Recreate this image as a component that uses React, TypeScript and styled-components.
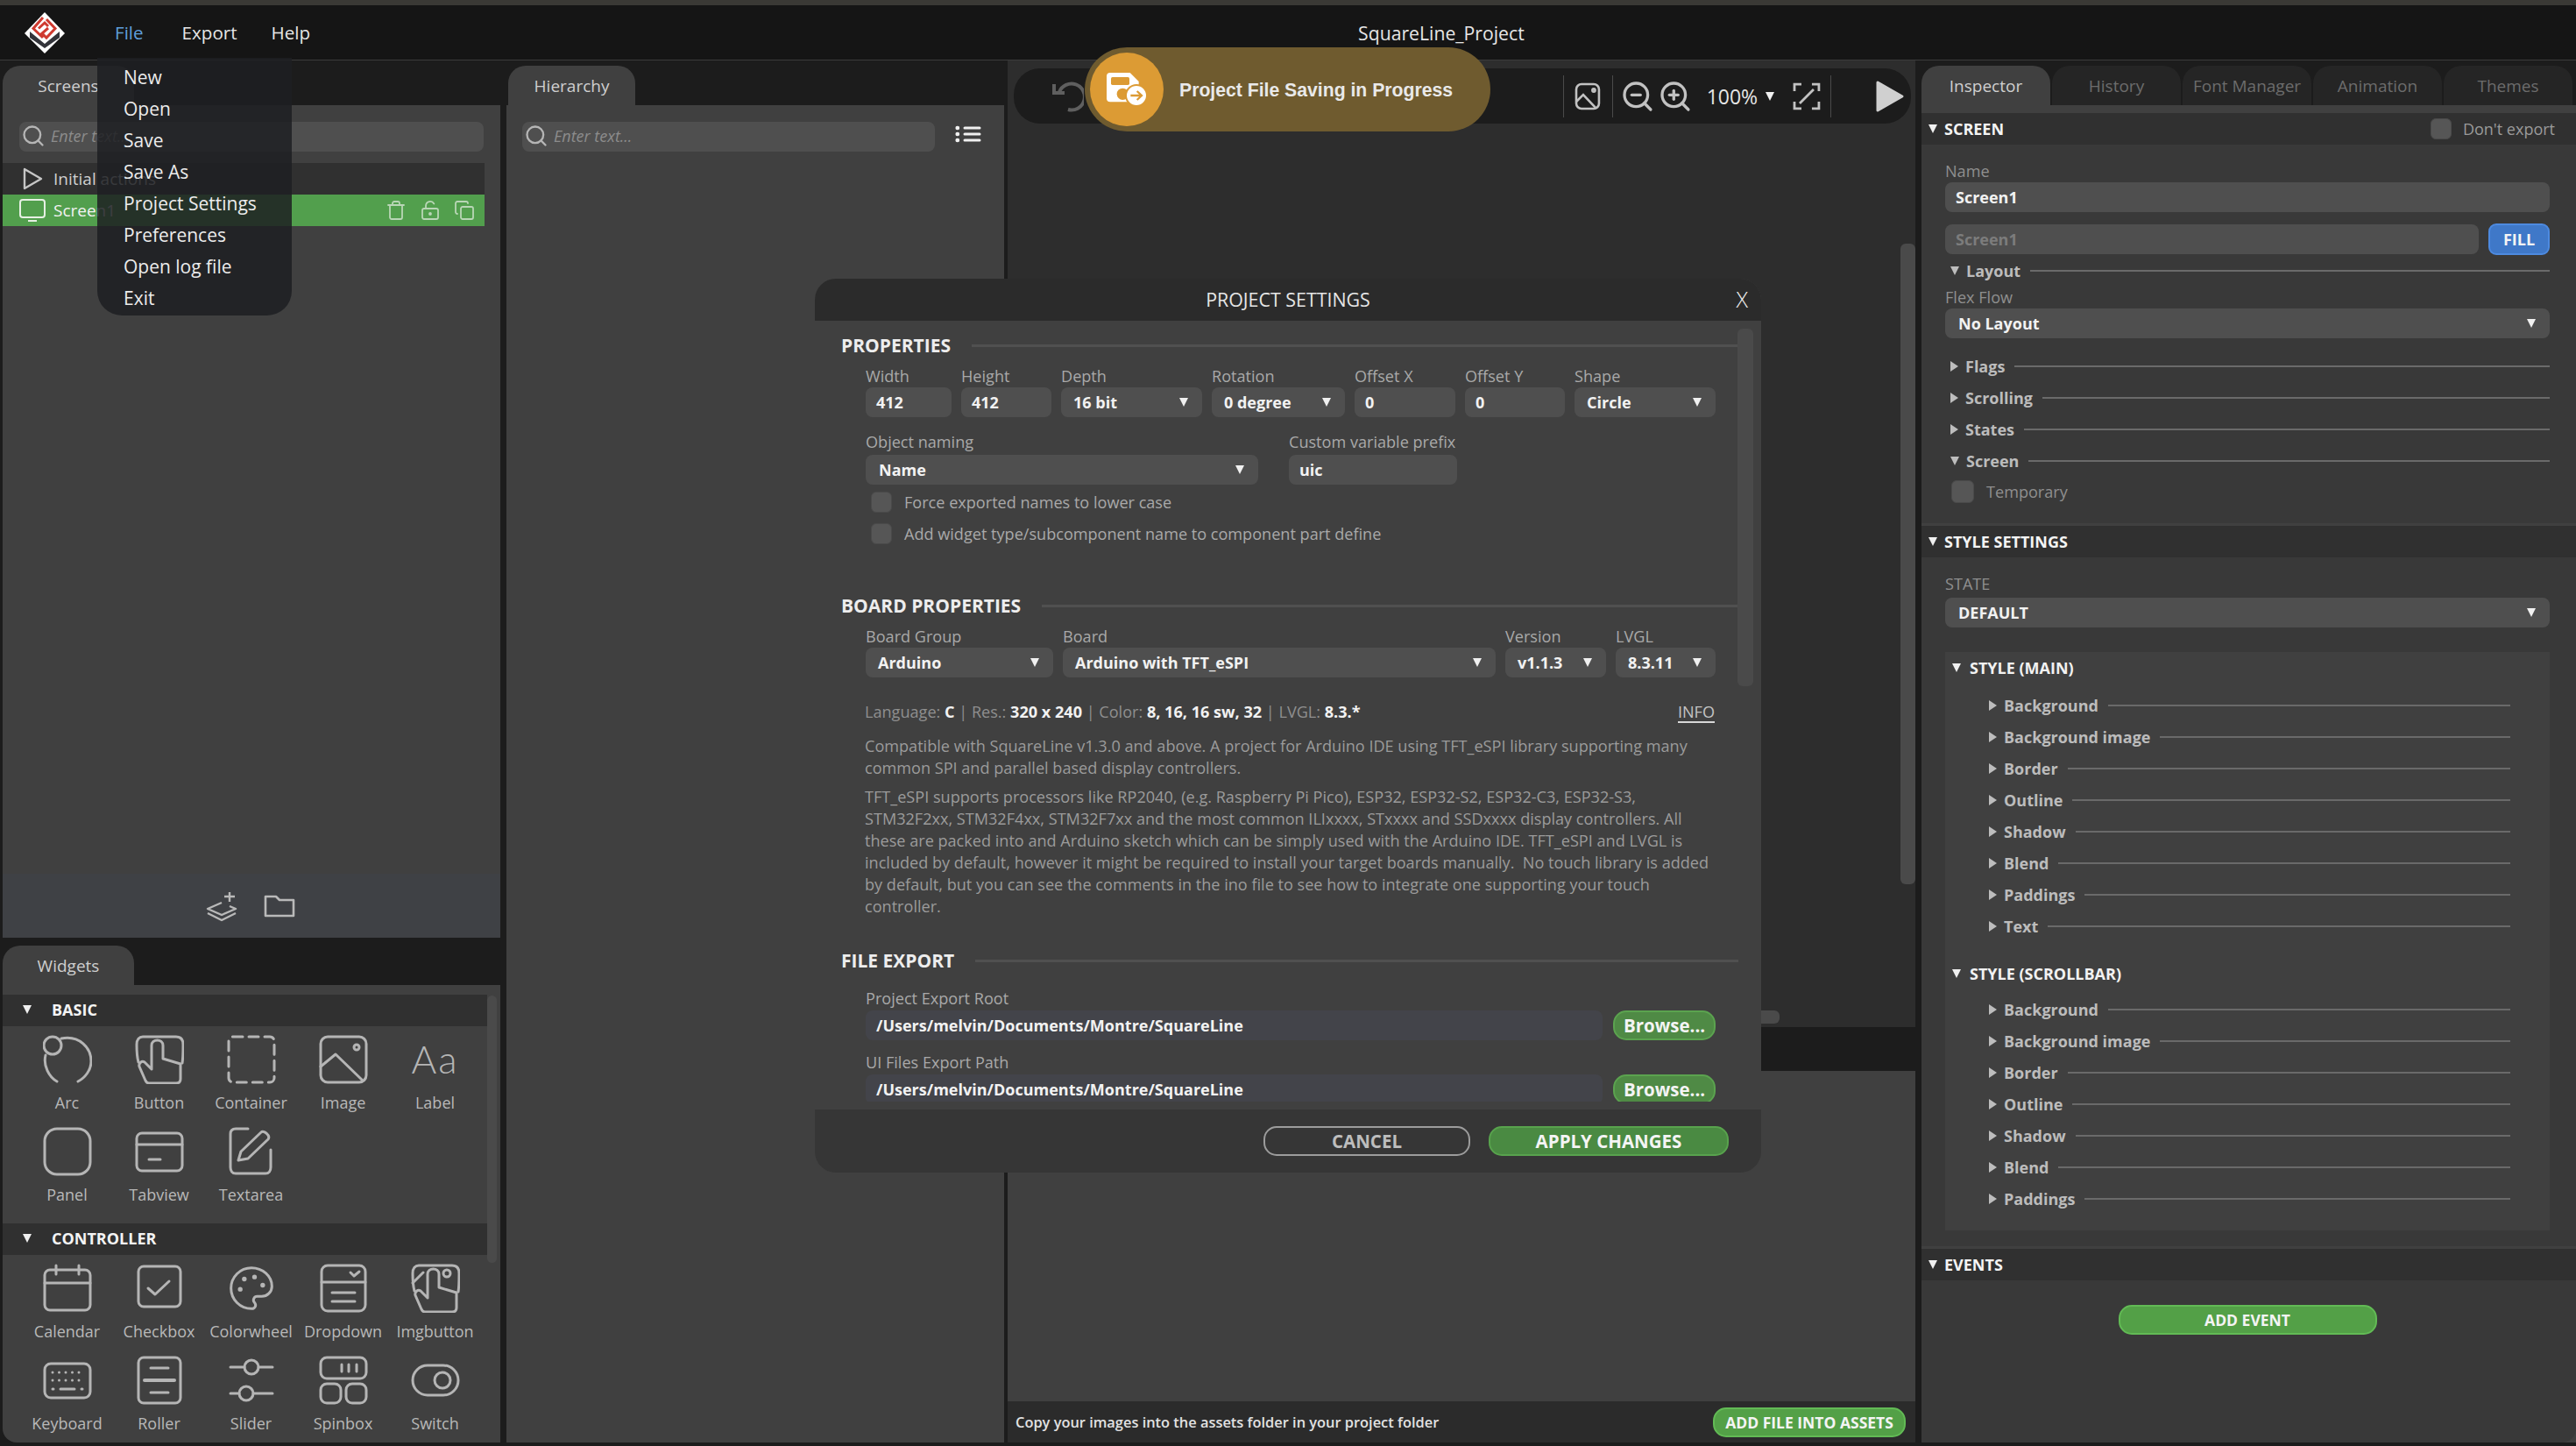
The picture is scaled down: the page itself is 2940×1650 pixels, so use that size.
import { ReactNode } from "react"
import styled, { createGlobalStyle } from "styled-components"
import { Copy, LockKeyholeOpen, Palette, Search, Trash, ZoomIn, ZoomOut } from "lucide-react"

const GlobalStyle = createGlobalStyle`
  html, body { margin: 0; padding: 0; background: #3a3935; }
  * { box-sizing: border-box; }
  body { font-family: "Open Sans", "Noto Sans", sans-serif; }
`

const Shell = styled.div`
  position: relative;
  width: 2940px;
  height: 1650px;
  overflow: hidden;
  display: flex;
  flex-direction: column;
  background: #3a3935;
`
const MenuBar = styled.header`
  height: 63px;
  margin-top: 6px;
  background: #151515;
  border-bottom: 1px solid #3c3c3c;
  display: flex;
  align-items: center;
  padding-left: 28px;
  flex: none;
`
const MenuItem = styled.div<{ $active?: boolean; $left: number }>`
  margin-left: ${(p) => p.$left}px;
  font-size: 20.6px;
  color: ${(p) => (p.$active ? "#5f9fdc" : "#e6e6e6")};
`
const AppTitle = styled.div`
  margin-left: 1196px;
  font-size: 21.2px;
  color: #e6e6e6;
`
const Workspace = styled.div`
  height: 1581px;
  flex: none;
  display: flex;
  background: #1c1c1c;
  overflow: hidden;
  border-bottom: 4px solid #1c1c1c;
  padding-left: 3px;
`
const Column = styled.section<{ $w: number; $mr?: number }>`
  width: ${(p) => p.$w}px;
  margin-right: ${(p) => p.$mr ?? 0}px;
  flex: none;
  display: flex;
  flex-direction: column;
  position: relative;
`
const TabStrip = styled.div<{ $top: number; $left?: number }>`
  flex: none;
  height: ${(p) => p.$top + 45}px;
  padding: ${(p) => p.$top}px 0 0 ${(p) => p.$left ?? 0}px;
  background: #1c1c1c;
  display: flex;
  gap: 2px;
`
const Tab = styled.div<{ $on?: boolean; $w?: number }>`
  width: ${(p) => p.$w ?? 150}px;
  height: 45px;
  border-radius: 20px 20px 0 0;
  background: ${(p) => (p.$on ? "#404040" : "#252525")};
  color: ${(p) => (p.$on ? "#cfcfcf" : "#6c6c6c")};
  font-size: 19px;
  display: flex;
  align-items: center;
  justify-content: center;
`
const Panel = styled.div<{ $h?: number; $corner?: boolean }>`
  background: #404040;
  ${(p) => (p.$h ? `height: ${p.$h}px; flex: none;` : "flex: 1;")}
  ${(p) => (p.$corner ? "border-bottom-left-radius: 16px;" : "")}
  position: relative;
`
const SearchBox = styled.div<{ $ml: number; $w: number }>`
  margin: 19px 0 13px ${(p) => p.$ml}px;
  width: ${(p) => p.$w}px;
  height: 34px;
  border-radius: 8px;
  background: #4f4f4f;
  display: flex;
  align-items: center;
  padding: 0 0 3px 2px;
  gap: 6px;
  color: #8c8c8c;
  font-size: 18px;
  font-style: italic;
`
const TreeRow = styled.div<{ $green?: boolean }>`
  width: 550px;
  height: 36px;
  display: flex;
  align-items: center;
  padding-right: 11px;
  background: ${(p) => (p.$green ? "#529f4d" : "#303030")};
  color: ${(p) => (p.$green ? "#f2f2f2" : "#cfcfcf")};
  font-size: 19px;
`
const TreeIcon = styled.span`
  width: 58px;
  display: flex;
  justify-content: center;
  padding-left: 13px;
  padding-right: 4px;
`
const TreeActions = styled.div`
  margin-left: auto;
  display: flex;
  gap: 15px;
  color: #b9d6b6;
`
const ProjectBar = styled.div`
  height: 73px;
  flex: none;
  background: #3f4145;
  display: flex;
  align-items: center;
  justify-content: center;
  gap: 30px;
  padding-right: 2px;
`
const GroupHeader = styled.div<{ $mt?: number }>`
  height: 36px;
  margin: ${(p) => p.$mt ?? 0}px 15px 0 0;
  padding: 0 0 2px 23px;
  background: #303030;
  display: flex;
  align-items: center;
  color: #f4f4f4;
  font-weight: 700;
  font-size: 18px;
  gap: 23px;
`
const WidgetGrid = styled.div`
  display: grid;
  grid-template-columns: repeat(5, 105px);
  grid-auto-rows: 105px;
  padding: 10px 0 5px 21px;
`
const WidgetCell = styled.div`
  display: flex;
  flex-direction: column;
  align-items: center;
  color: #b8b8b8;
  font-size: 18px;
  line-height: 24px;
  gap: 9px;
`
const WidgetIcon = styled.svg.attrs({
  viewBox: "0 0 56 56",
  fill: "none",
  stroke: "#b5b5b5",
  strokeWidth: 3,
  strokeLinecap: "round",
  strokeLinejoin: "round",
})`
  width: 56px;
  height: 56px;
  flex: none;
`
const AaGlyph = styled.div`
  height: 56px;
  width: 56px;
  font-family: "Lato", sans-serif;
  font-weight: 300;
  font-size: 44px;
  letter-spacing: 2px;
  white-space: nowrap;
  line-height: 54px;
  color: #b5b5b5;
  text-align: center;
`
const ScrollThumb = styled.div<{ $top: number; $h: number; $x: number; $w: number }>`
  position: absolute;
  top: ${(p) => p.$top}px;
  right: ${(p) => p.$x}px;
  width: ${(p) => p.$w}px;
  height: ${(p) => p.$h}px;
  border-radius: 6px;
  background: #4a4a4a;
`
const Caret = styled.span<{ $dir?: "down" | "right"; $color?: string }>`
  display: inline-block;
  flex: none;
  width: 0;
  height: 0;
  ${(p) =>
    p.$dir === "right"
      ? `border-top: 6px solid transparent; border-bottom: 6px solid transparent; border-left: 9px solid ${p.$color ?? "#bdbdbd"};`
      : `border-left: 5.5px solid transparent; border-right: 5.5px solid transparent; border-top: 10px solid ${p.$color ?? "#f0f0f0"};`}
`
const Viewport = styled.div`
  height: 1103px;
  flex: none;
  background: #2d2d2d;
  padding-top: 9px;
  position: relative;
`
const Toolbar = styled.div`
  margin: 0 5px 0 7px;
  height: 63px;
  border-radius: 30px;
  background: #1c1c1c;
  display: flex;
  align-items: center;
  padding: 0 8px 0 44px;
  color: #c2c2c2;
`
const ToolSep = styled.div<{ $ml?: number; $mr?: number }>`
  width: 1px;
  height: 48px;
  background: #4a4a4a;
  margin-left: ${(p) => p.$ml ?? 0}px;
  margin-right: ${(p) => p.$mr ?? 0}px;
`
const ZoomValue = styled.div`
  font-size: 23px;
  color: #e6e6e6;
  margin: 0 9px 0 16px;
`
const ZoomInIcon = styled(ZoomIn)`
  margin-left: 3px;
`
const FitIcon = styled.svg`
  margin-left: 21px;
`
const HorizontalThumb = styled.div`
  position: absolute;
  left: 10px;
  top: 1084px;
  width: 871px;
  height: 15px;
  border-radius: 6px;
  background: #4a4a4a;
`
const AssetFooter = styled.div`
  height: 47px;
  flex: none;
  background: #2b2b2b;
  display: flex;
  align-items: center;
  justify-content: space-between;
  padding: 0 11px 0 9px;
  font-size: 16.4px;
  font-weight: 600;
  color: #e2e2e2;
`
const GreenButton = styled.div<{ $w: number; $h?: number; $size?: number }>`
  width: ${(p) => p.$w}px;
  height: ${(p) => p.$h ?? 34}px;
  flex: none;
  border-radius: 15px;
  background: #53a047;
  border: 2px solid #62bb55;
  color: #f4f4f4;
  font-weight: 700;
  font-size: ${(p) => p.$size ?? 17.5}px;
  white-space: nowrap;
  display: flex;
  align-items: center;
  justify-content: center;
`
const FillButton = styled(GreenButton)`
  background: #3f78c8;
  border-color: #4d8ae0;
  border-radius: 9px;
`
const Inspector = styled.div`
  flex: 1;
  display: flex;
  flex-direction: column;
  padding-top: 9px;
  background: #404040;
`
const SectionHeader = styled.div`
  flex: none;
  height: 36px;
  background: #303030;
  display: flex;
  align-items: center;
  padding: 0 24px 0 8px;
  gap: 8px;
  color: #f4f4f4;
  font-size: 18px;
  font-weight: 700;
`
const HeaderTitle = styled.span`
  margin-right: auto;
`
const ExportLabel = styled.span`
  margin-left: 5px;
  font-size: 18px;
  font-weight: 400;
  color: #9a9a9a;
`
const SectionBody = styled.div<{ $pad: number; $h?: number; $corner?: boolean }>`
  background: #393939;
  padding: ${(p) => p.$pad}px 30px 0 27px;
  ${(p) => (p.$h ? `height: ${p.$h}px; flex: none;` : "flex: 1;")}
  ${(p) => (p.$corner ? "border-bottom-right-radius: 16px;" : "")}
`
const SectionGap = styled.div`
  height: 3px;
  flex: none;
`
const FieldLabel = styled.div<{ $inspector?: boolean; $mt?: number }>`
  font-size: 18.1px;
  line-height: 20px;
  margin-top: ${(p) => p.$mt ?? 0}px;
  color: ${(p) => (p.$inspector ? "#8f8f8f" : "#a9a9a9")};
  white-space: nowrap;
`
const ValueBox = styled.div<{ $muted?: boolean; $pl?: number; $dark?: boolean; $mt?: number; $grow?: boolean }>`
  height: 34px;
  margin-top: ${(p) => p.$mt ?? 0}px;
  ${(p) => (p.$grow ? "flex: 1;" : "")}
  border-radius: 8px;
  background: ${(p) => (p.$dark ? "#43444a" : "#4f4f4f")};
  display: flex;
  align-items: center;
  justify-content: space-between;
  padding: 0 16px 0 ${(p) => p.$pl ?? 12}px;
  font-size: 18px;
  font-weight: 700;
  color: ${(p) => (p.$muted ? "#7c7c7c" : "#f2f2f2")};
  white-space: nowrap;
`
const InlineRow = styled.div<{ $mt?: number; $gap?: number; $pl?: number; $center?: boolean }>`
  display: flex;
  align-items: center;
  margin-top: ${(p) => p.$mt ?? 0}px;
  gap: ${(p) => p.$gap ?? 0}px;
  padding-left: ${(p) => p.$pl ?? 0}px;
  ${(p) => (p.$center ? "justify-content: center;" : "")}
`
const CollapseRow = styled.div<{ $mt?: number }>`
  height: 24px;
  margin-top: ${(p) => p.$mt ?? 0}px;
  display: flex;
  align-items: center;
  gap: 8px;
  font-size: 18px;
  font-weight: 700;
  color: #bcbcbc;
  white-space: nowrap;
  &::after {
    content: "";
    flex: 1;
    height: 2px;
    margin-left: 3px;
    background: #6a6a6a;
  }
`
const CollapseList = styled.div<{ $pl: number; $pr: number; $pitch: number; $mt?: number }>`
  display: flex;
  flex-direction: column;
  margin-top: ${(p) => p.$mt ?? 0}px;
  gap: ${(p) => p.$pitch - 24}px;
  padding-left: ${(p) => p.$pl}px;
  padding-right: ${(p) => p.$pr}px;
`
const Check = styled.span<{ $size?: number }>`
  width: ${(p) => p.$size ?? 24}px;
  height: ${(p) => p.$size ?? 24}px;
  flex: none;
  border-radius: 6px;
  background: #565656;
  border: 1px solid #4a4a4a;
`
const StyleBox = styled.div`
  margin-top: 28px;
  height: 660px;
  background: #404040;
  padding-top: 6px;
`
const StyleHeading = styled.div<{ $mt?: number; $mb: number }>`
  height: 24px;
  margin-top: ${(p) => p.$mt ?? 0}px;
  margin-bottom: ${(p) => p.$mb}px;
  padding-left: 8px;
  display: flex;
  align-items: center;
  gap: 10px;
  font-size: 18px;
  font-weight: 700;
  color: #f2f2f2;
`
const DropdownMenu = styled.div`
  position: absolute;
  left: 111px;
  top: 66px;
  width: 222px;
  height: 294px;
  padding: 4px 0 0 30px;
  border-radius: 0 0 28px 28px;
  background: rgba(29, 30, 34, 0.85);
  color: #ececec;
  font-size: 21px;
  line-height: 36px;
`
const SavingPill = styled.div`
  position: absolute;
  left: 1238px;
  top: 54px;
  width: 463px;
  height: 96px;
  border-radius: 48px;
  background: #6f5b2f;
  display: flex;
  align-items: center;
  padding-left: 6px;
  gap: 18px;
  font-family: "Liberation Sans", Arial, sans-serif;
  font-weight: 700;
  font-size: 21.2px;
  color: #e9e9e9;
`
const PillText = styled.span`
  padding-top: 2px;
`
const PillBadge = styled.div`
  width: 84px;
  height: 84px;
  border-radius: 50%;
  background: #dc9b34;
  display: flex;
  align-items: center;
  justify-content: center;
`
const Modal = styled.div`
  position: absolute;
  left: 930px;
  top: 318px;
  width: 1080px;
  height: 1020px;
  border-radius: 24px;
  overflow: hidden;
  display: flex;
  flex-direction: column;
  background: #404040;
`
const ModalHeader = styled.div`
  height: 48px;
  flex: none;
  background: #2b2b2b;
  display: flex;
  align-items: center;
  justify-content: center;
  padding-bottom: 2px;
  position: relative;
  color: #e6e6e6;
  font-size: 21.4px;
`
const CloseMark = styled.div`
  position: absolute;
  right: 15px;
  top: 6px;
  color: #f0f0f0;
  font-size: 25px;
  font-weight: 300;
`
const ModalBody = styled.div`
  height: 891px;
  flex: none;
  overflow: hidden;
  padding: 16px 0 0 31px;
  position: relative;
`
const ModalFooter = styled.div`
  margin-top: 9px;
  flex: 1;
  background: #363636;
  display: flex;
  justify-content: flex-end;
  gap: 21px;
  padding: 19px 37px 0 0;
`
const OutlineButton = styled.div`
  width: 236px;
  height: 34px;
  border-radius: 15px;
  border: 2px solid #9c9c9c;
  color: #bdbdbd;
  font-size: 20.5px;
  font-weight: 700;
  display: flex;
  align-items: center;
  justify-content: center;
`
const SolidButton = styled(GreenButton)`
  background: #4a8a42;
  border-color: #58a34d;
`
const BrowseButton = styled(GreenButton)`
  background: #4f8a45;
  border-color: #5ba34f;
  font-size: 20.5px;
`
const HeadingRow = styled.div<{ $mt?: number }>`
  height: 24px;
  margin-top: ${(p) => p.$mt ?? 0}px;
  margin-left: -1px;
  display: flex;
  align-items: center;
  gap: 24px;
  padding-right: 26px;
  font-size: 21px;
  font-weight: 700;
  color: #ededed;
  white-space: nowrap;
  &::after {
    content: "";
    flex: 1;
    height: 3px;
    background: #505050;
  }
`
const FieldRow = styled.div<{ $mt: number; $gap?: number }>`
  display: flex;
  gap: ${(p) => p.$gap ?? 11}px;
  margin: ${(p) => p.$mt}px 0 0 27px;
  width: 970px;
`
const Field = styled.div<{ $w: number; $gap?: number }>`
  width: ${(p) => p.$w}px;
  flex: none;
  display: flex;
  flex-direction: column;
  gap: ${(p) => p.$gap ?? 3}px;
`
const NamingRow = styled(FieldRow)`
  align-items: flex-end;
`
const CheckList = styled.div`
  margin-top: 2px;
`
const CheckRow = styled.div`
  height: 36px;
  margin-left: 33px;
  display: flex;
  align-items: center;
  gap: 14px;
  font-size: 18.1px;
  color: #a9a9a9;
`
const StatLine = styled.div`
  margin: 29px 0 0 26px;
  width: 970px;
  height: 20px;
  line-height: 20px;
  font-size: 18.1px;
  color: #8f8f8f;
  display: flex;
  justify-content: space-between;
  & b {
    color: #f2f2f2;
    font-weight: 700;
  }
`
const InfoLink = styled.span`
  color: #c4c4c4;
  border-bottom: 2px solid #d8d8d8;
  height: 23px;
`
const Para = styled.p<{ $mt: number }>`
  margin: ${(p) => p.$mt}px 0 0 26px;
  width: 970px;
  font-size: 18.1px;
  line-height: 25px;
  white-space: pre-wrap;
  color: #9b9b9b;
`
const PathRow = styled.div<{ $mt: number }>`
  margin: ${(p) => p.$mt}px 0 0 27px;
`
const PathControls = styled.div`
  display: flex;
  gap: 12px;
  margin-top: 4px;
  width: 970px;
`
const ListSpot = styled.span`
  margin-left: 23px;
  display: flex;
`

const Hand = ({ picture }: { picture?: boolean }) => (
  <WidgetIcon>
    <path d="M4 31C2 24 2 16 2 11C2 5 5 2 9 2H47C52 2 55 5 55 11C55 18 55 26 54 32" />
    <path d="M19 39V12C19 4 32 4 32 12V27L52 33V50C52 54 50 55 47 55H16C14 55 13 54 12 52L5 36C4 32 8 29 11 31L19 39" />
    {picture && <circle cx="41" cy="11" r="4" />}
    {picture && <path d="M2 22L14 10" />}
  </WidgetIcon>
)

const basicWidgets: { name: string; icon: ReactNode }[] = [
  {
    name: "Arc",
    icon: (
      <WidgetIcon>
        <circle cx="11" cy="12" r="10" />
        <path d="M21 4C42 0 55 15 55 30C55 40 48 49 40 53" />
        <path d="M3 23C0 35 7 48 16 53" />
      </WidgetIcon>
    ),
  },
  { name: "Button", icon: <Hand /> },
  {
    name: "Container",
    icon: (
      <WidgetIcon>
        <rect x="2" y="2" width="52" height="52" rx="5" strokeDasharray="11 7" />
      </WidgetIcon>
    ),
  },
  {
    name: "Image",
    icon: (
      <WidgetIcon>
        <rect x="2" y="2" width="52" height="52" rx="8" />
        <circle cx="43" cy="14" r="3" />
        <path d="M2 36L19 22L50 52" />
      </WidgetIcon>
    ),
  },
  { name: "Label", icon: <AaGlyph>Aa</AaGlyph> },
  {
    name: "Panel",
    icon: (
      <WidgetIcon>
        <rect x="2" y="2" width="52" height="52" rx="14" />
      </WidgetIcon>
    ),
  },
  {
    name: "Tabview",
    icon: (
      <WidgetIcon>
        <rect x="2" y="7" width="52" height="43" rx="6" />
        <path d="M2 20H54M16 37H29" />
      </WidgetIcon>
    ),
  },
  {
    name: "Textarea",
    icon: (
      <WidgetIcon>
        <path d="M24 2H10C6 2 4 4 4 8V46C4 50 6 53 10 53H44C48 53 50 50 50 46V26" />
        <path d="M13 38L16 28L39 6C42 3 50 10 47 14L24 36Z" />
      </WidgetIcon>
    ),
  },
]

const controllerWidgets: { name: string; icon: ReactNode }[] = [
  {
    name: "Calendar",
    icon: (
      <WidgetIcon>
        <rect x="2" y="7" width="52" height="46" rx="6" />
        <path d="M2 22H54M15 2V12M41 2V12" />
      </WidgetIcon>
    ),
  },
  {
    name: "Checkbox",
    icon: (
      <WidgetIcon>
        <rect x="4" y="3" width="48" height="46" rx="6" />
        <path d="M15 28L23 35L39 20" />
      </WidgetIcon>
    ),
  },
  { name: "Colorwheel", icon: <Palette size={56} strokeWidth={1.3} color="#b5b5b5" /> },
  {
    name: "Dropdown",
    icon: (
      <WidgetIcon>
        <rect x="3" y="2" width="50" height="52" rx="7" />
        <path d="M3 21H53M15 33H41M15 43H41M36 10L40 14L46 9" />
      </WidgetIcon>
    ),
  },
  { name: "Imgbutton", icon: <Hand picture /> },
  {
    name: "Keyboard",
    icon: (
      <WidgetIcon>
        <rect x="2" y="9" width="52" height="39" rx="7" />
        <path strokeDasharray="0 7.5" d="M11 19H47M11 28H47" />
        <path d="M11 38H12M20 38H36M44 38H45" />
      </WidgetIcon>
    ),
  },
  {
    name: "Roller",
    icon: (
      <WidgetIcon>
        <rect x="4" y="2" width="48" height="52" rx="6" />
        <path d="M18 14H38M18 42H38" />
        <path strokeWidth="4" d="M11 28H45" />
      </WidgetIcon>
    ),
  },
  {
    name: "Slider",
    icon: (
      <WidgetIcon>
        <circle cx="28" cy="13" r="8" />
        <circle cx="22" cy="43" r="8" />
        <path d="M4 13H20M36 13H52M4 43H14M30 43H52" />
      </WidgetIcon>
    ),
  },
  {
    name: "Spinbox",
    icon: (
      <WidgetIcon>
        <rect x="2" y="2" width="52" height="24" rx="7" />
        <rect x="2" y="32" width="23" height="22" rx="7" />
        <rect x="31" y="32" width="23" height="22" rx="7" />
        <path d="M26 10V18M34 10V18M43 10V18" />
      </WidgetIcon>
    ),
  },
  {
    name: "Switch",
    icon: (
      <WidgetIcon>
        <rect x="2" y="11" width="52" height="34" rx="17" />
        <circle cx="36" cy="28" r="9" />
      </WidgetIcon>
    ),
  },
]

const Logo = () => (
  <svg width="46" height="47" viewBox="0 0 46 47">
    <path d="M23 0L46 24L23 47L0 24Z" fill="#fff" />
    <path d="M6 22L23 36L40 22V29L23 41L6 29Z" fill="#33343a" />
    <path d="M21 6L10 18.5L21 29M16 18.5L23 12L27 16M25 8L35 18.5L25 29L20 24L27 18" fill="none" stroke="#cf3a30" strokeWidth="3" />
  </svg>
)

const ListIcon = () => (
  <svg width="30" height="20" viewBox="0 0 30 20" fill="none" stroke="#f0f0f0" strokeLinecap="round">
    <path strokeWidth="3" d="M11 3H28M11 10H28M11 17H28" />
    <path strokeWidth="4.4" d="M2.6 3H3M2.6 10H3M2.6 17H3" />
  </svg>
)

const SaveGlyph = () => (
  <svg width="46" height="39" viewBox="70 85 138 117">
    <path d="M70 97Q70 85 82 85H150L180 115V185H82Q70 185 70 173Z" fill="#fff" />
    <rect x="85" y="100" width="63" height="27" rx="5" fill="#dc9b34" />
    <circle cx="125" cy="158" r="20" fill="#dc9b34" />
    <circle cx="172" cy="163" r="39" fill="#dc9b34" />
    <circle cx="172" cy="163" r="33" fill="#fff" />
    <path d="M152 163H190M174 148L190 163L174 178" fill="none" stroke="#dc9b34" strokeWidth="7" />
  </svg>
)

const inspectorRow = (label: string, open?: boolean, mt?: number) => (
  <CollapseRow key={label} $mt={mt}>
    <Caret $dir={open ? "down" : "right"} $color="#bdbdbd" />
    {label}
  </CollapseRow>
)

const StyleList = ({ items }: { items: string[] }) => (
  <CollapseList $pl={50} $pr={45} $pitch={36}>
    {items.map((i) => inspectorRow(i))}
  </CollapseList>
)

const Select = ({ value, pl, mt }: { value: string; pl?: number; mt?: number }) => (
  <ValueBox $pl={pl} $mt={mt}>
    {value}
    <Caret />
  </ValueBox>
)

export default function App() {
  return (
    <Shell>
      <GlobalStyle />
      <MenuBar>
        <Logo />
        <MenuItem $active $left={57}>File</MenuItem>
        <MenuItem $left={44}>Export</MenuItem>
        <MenuItem $left={39}>Help</MenuItem>
        <AppTitle>SquareLine_Project</AppTitle>
      </MenuBar>

      <Workspace>
        <Column $w={568} $mr={7}>
          <TabStrip $top={6}>
            <Tab $on>Screens</Tab>
          </TabStrip>
          <Panel>
            <SearchBox $ml={19} $w={530}>
              <Search size={28} color="#b5b5b5" strokeWidth={2} />
              Enter text...
            </SearchBox>
            <TreeRow>
              <TreeIcon>
                <svg width="24" height="26" viewBox="0 0 24 26" fill="none" stroke="#c6c6c6" strokeWidth="2.4" strokeLinejoin="round">
                  <path d="M3 2L22 13L3 24Z" />
                </svg>
              </TreeIcon>
              Initial actions
            </TreeRow>
            <TreeRow $green>
              <TreeIcon>
                <svg width="30" height="26" viewBox="0 0 30 26" fill="none" stroke="#e6f0e4" strokeWidth="2">
                  <rect x="1" y="1" width="28" height="20" rx="3" />
                  <path d="M10 25H20" />
                </svg>
              </TreeIcon>
              Screen1
              <TreeActions>
                <Trash size={24} strokeWidth={1.8} />
                <LockKeyholeOpen size={24} strokeWidth={1.8} />
                <Copy size={24} strokeWidth={1.8} />
              </TreeActions>
            </TreeRow>
          </Panel>
          <ProjectBar>
            <svg width="36" height="36" viewBox="0 0 36 36" fill="none" stroke="#b9b9b9" strokeWidth="2.4" strokeLinejoin="round">
              <path d="M18 14L2 21L18 28L34 21L27 18" />
              <path d="M2 26L18 34L34 26" />
              <path d="M27 2V13M21 7H33" />
            </svg>
            <svg width="36" height="26" viewBox="0 0 36 26" fill="none" stroke="#b9b9b9" strokeWidth="2.6" strokeLinejoin="round">
              <path d="M2 2H14L18 6H34V24H2Z" />
            </svg>
          </ProjectBar>
          <TabStrip $top={9}>
            <Tab $on>Widgets</Tab>
          </TabStrip>
          <Panel $h={522} $corner>
            <GroupHeader $mt={11}>
              <Caret />
              BASIC
            </GroupHeader>
            <WidgetGrid>
              {basicWidgets.map((w) => (
                <WidgetCell key={w.name}>
                  {w.icon}
                  {w.name}
                </WidgetCell>
              ))}
            </WidgetGrid>
            <GroupHeader>
              <Caret />
              CONTROLLER
            </GroupHeader>
            <WidgetGrid>
              {controllerWidgets.map((w) => (
                <WidgetCell key={w.name}>
                  {w.icon}
                  {w.name}
                </WidgetCell>
              ))}
            </WidgetGrid>
            <ScrollThumb $top={12} $h={305} $x={4} $w={11} />
          </Panel>
        </Column>

        <Column $w={568} $mr={4}>
          <TabStrip $top={6} $left={2}>
            <Tab $on $w={145}>Hierarchy</Tab>
          </TabStrip>
          <Panel>
            <InlineRow>
              <SearchBox $ml={18} $w={471}>
                <Search size={28} color="#b5b5b5" strokeWidth={2} />
                Enter text...
              </SearchBox>
              <ListSpot>
                <ListIcon />
              </ListSpot>
            </InlineRow>
          </Panel>
        </Column>

        <Column $w={1036} $mr={7}>
          <Viewport>
            <Toolbar>
              <svg width="36" height="36" viewBox="0 0 36 36" fill="none" stroke="#5f5f5f" strokeWidth="4">
                <path d="M8 13A15 15 0 1 1 18 33" />
                <path d="M2 4V14H14" />
              </svg>
              <ToolSep $ml={547} $mr={12} />
              <svg width="30" height="32" viewBox="0 0 30 32" fill="none" stroke="#c2c2c2" strokeWidth="2.6">
                <rect x="2" y="2" width="26" height="28" rx="6" />
                <circle cx="22" cy="9" r="1.6" />
                <path d="M2 22L10 14L24 29" />
              </svg>
              <ToolSep $ml={13} $mr={8} />
              <ZoomOut size={40} strokeWidth={2} />
              <ZoomInIcon size={40} strokeWidth={2} />
              <ZoomValue>100%</ZoomValue>
              <Caret />
              <FitIcon width="32" height="32" viewBox="0 0 32 32" fill="none" stroke="#c2c2c2" strokeWidth="2.8">
                <path d="M10 2H2V10M22 30H30V22M22 2H30V10M10 30H2V22M24 8L8 24" />
              </FitIcon>
              <ToolSep $ml={11} $mr={51} />
              <svg width="32" height="36" viewBox="0 0 32 36" fill="#d0d0d0">
                <path d="M2 2L30 18L2 34Z" stroke="#d0d0d0" strokeWidth="3" strokeLinejoin="round" />
              </svg>
            </Toolbar>
            <ScrollThumb $top={209} $h={731} $x={0} $w={17} />
            <HorizontalThumb />
          </Viewport>
          <TabStrip $top={5} />
          <Panel />
          <AssetFooter>
            Copy your images into the assets folder in your project folder
            <GreenButton $w={220}>ADD FILE INTO ASSETS</GreenButton>
          </AssetFooter>
        </Column>

        <Column $w={747}>
          <TabStrip $top={6}>
            {["Inspector", "History", "Font Manager", "Animation", "Themes"].map((t, i) => (
              <Tab key={t} $on={i === 0} $w={147}>{t}</Tab>
            ))}
          </TabStrip>
          <Inspector>
            <SectionHeader>
              <Caret />
              <HeaderTitle>SCREEN</HeaderTitle>
              <Check />
              <ExportLabel>Don't export</ExportLabel>
            </SectionHeader>
            <SectionBody $pad={20} $h={432}>
              <FieldLabel $inspector>Name</FieldLabel>
              <ValueBox $mt={3}>Screen1</ValueBox>
              <InlineRow $mt={13} $gap={11}>
                <ValueBox $muted $grow>Screen1</ValueBox>
                <FillButton $w={70} $h={36} $size={18}>FILL</FillButton>
              </InlineRow>
              <CollapseList $pl={6} $pr={0} $pitch={36}>
                {inspectorRow("Layout", true, 6)}
              </CollapseList>
              <FieldLabel $inspector $mt={8}>Flex Flow</FieldLabel>
              <Select value="No Layout" pl={15} mt={3} />
              <CollapseList $pl={6} $pr={0} $pitch={36} $mt={20}>
                {inspectorRow("Flags")}
                {inspectorRow("Scrolling")}
                {inspectorRow("States")}
                {inspectorRow("Screen", true)}
              </CollapseList>
              <InlineRow $mt={10} $gap={14} $pl={7}>
                <Check $size={26} />
                <FieldLabel $inspector>Temporary</FieldLabel>
              </InlineRow>
            </SectionBody>
            <SectionGap />
            <SectionHeader>
              <Caret />
              STYLE SETTINGS
            </SectionHeader>
            <SectionBody $pad={20} $h={786}>
              <FieldLabel $inspector>STATE</FieldLabel>
              <Select value="DEFAULT" pl={15} mt={6} />
              <StyleBox>
                <StyleHeading $mb={19}>
                  <Caret />
                  STYLE (MAIN)
                </StyleHeading>
                <StyleList items={["Background", "Background image", "Border", "Outline", "Shadow", "Blend", "Paddings", "Text"]} />
                <StyleHeading $mt={30} $mb={17}>
                  <Caret />
                  STYLE (SCROLLBAR)
                </StyleHeading>
                <StyleList items={["Background", "Background image", "Border", "Outline", "Shadow", "Blend", "Paddings"]} />
              </StyleBox>
            </SectionBody>
            <SectionGap />
            <SectionHeader>
              <Caret />
              EVENTS
            </SectionHeader>
            <SectionBody $pad={28} $corner>
              <InlineRow $center>
                <GreenButton $w={295}>ADD EVENT</GreenButton>
              </InlineRow>
            </SectionBody>
          </Inspector>
        </Column>
      </Workspace>

      <DropdownMenu>
        {["New", "Open", "Save", "Save As", "Project Settings", "Preferences", "Open log file", "Exit"].map((m) => (
          <div key={m}>{m}</div>
        ))}
      </DropdownMenu>

      <Modal>
        <ModalHeader>
          PROJECT SETTINGS
          <CloseMark>X</CloseMark>
        </ModalHeader>
        <ModalBody>
          <HeadingRow>PROPERTIES</HeadingRow>
          <FieldRow $mt={13}>
            <Field $w={98}><FieldLabel>Width</FieldLabel><ValueBox>412</ValueBox></Field>
            <Field $w={103}><FieldLabel>Height</FieldLabel><ValueBox>412</ValueBox></Field>
            <Field $w={161}><FieldLabel>Depth</FieldLabel><Select value="16 bit" pl={14} /></Field>
            <Field $w={152}><FieldLabel>Rotation</FieldLabel><Select value="0 degree" pl={14} /></Field>
            <Field $w={115}><FieldLabel>Offset X</FieldLabel><ValueBox>0</ValueBox></Field>
            <Field $w={114}><FieldLabel>Offset Y</FieldLabel><ValueBox>0</ValueBox></Field>
            <Field $w={161}><FieldLabel>Shape</FieldLabel><Select value="Circle" pl={14} /></Field>
          </FieldRow>
          <NamingRow $mt={18} $gap={35}>
            <Field $w={448} $gap={5}><FieldLabel>Object naming</FieldLabel><Select value="Name" pl={15} /></Field>
            <Field $w={192} $gap={5}><FieldLabel>Custom variable prefix</FieldLabel><ValueBox>uic</ValueBox></Field>
          </NamingRow>
          <CheckList>
            <CheckRow><Check />Force exported names to lower case</CheckRow>
            <CheckRow><Check />Add widget type/subcomponent name to component part define</CheckRow>
          </CheckList>
          <HeadingRow $mt={52}>BOARD PROPERTIES</HeadingRow>
          <FieldRow $mt={13}>
            <Field $w={214}><FieldLabel>Board Group</FieldLabel><Select value="Arduino" pl={14} /></Field>
            <Field $w={494}><FieldLabel>Board</FieldLabel><Select value="Arduino with TFT_eSPI" pl={14} /></Field>
            <Field $w={115}><FieldLabel>Version</FieldLabel><Select value="v1.1.3" pl={14} /></Field>
            <Field $w={114}><FieldLabel>LVGL</FieldLabel><Select value="8.3.11" pl={14} /></Field>
          </FieldRow>
          <StatLine>
            <span>Language: <b>C</b> | Res.: <b>320 x 240</b> | Color: <b>8, 16, 16 sw, 32</b> | LVGL: <b>8.3.*</b></span>
            <InfoLink>INFO</InfoLink>
          </StatLine>
          <Para $mt={17}>
            Compatible with SquareLine v1.3.0 and above. A project for Arduino IDE using TFT_eSPI library supporting many common SPI and parallel based display controllers.
          </Para>
          <Para $mt={8}>
            TFT_eSPI supports processors like RP2040, (e.g. Raspberry Pi Pico), ESP32, ESP32-S2, ESP32-C3, ESP32-S3, STM32F2xx, STM32F4xx, STM32F7xx and the most common ILIxxxx, STxxxx and SSDxxxx display controllers. All these are packed into and Arduino sketch which can be simply used with the Arduino IDE. TFT_eSPI and LVGL is included by default, however it might be required to install your target boards manually.  No touch library is added by default, but you can see the comments in the ino file to see how to integrate one supporting your touch controller.
          </Para>
          <HeadingRow $mt={37}>FILE EXPORT</HeadingRow>
          <PathRow $mt={21}>
            <FieldLabel>Project Export Root</FieldLabel>
            <PathControls>
              <ValueBox $dark $grow>/Users/melvin/Documents/Montre/SquareLine</ValueBox>
              <BrowseButton $w={117}>Browse...</BrowseButton>
            </PathControls>
          </PathRow>
          <PathRow $mt={15}>
            <FieldLabel>UI Files Export Path</FieldLabel>
            <PathControls>
              <ValueBox $dark $grow>/Users/melvin/Documents/Montre/SquareLine</ValueBox>
              <BrowseButton $w={117}>Browse...</BrowseButton>
            </PathControls>
          </PathRow>
          <ScrollThumb $top={9} $h={408} $x={9} $w={18} />
        </ModalBody>
        <ModalFooter>
          <OutlineButton>CANCEL</OutlineButton>
          <SolidButton $w={274} $size={20.5}>APPLY CHANGES</SolidButton>
        </ModalFooter>
      </Modal>

      <SavingPill>
        <PillBadge>
          <SaveGlyph />
        </PillBadge>
        <PillText>Project File Saving in Progress</PillText>
      </SavingPill>
    </Shell>
  )
}
